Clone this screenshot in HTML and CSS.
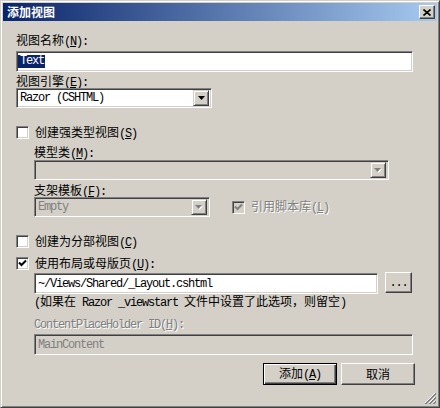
FILE: index.html
```html
<!DOCTYPE html>
<html>
<head>
<meta charset="utf-8">
<link rel="stylesheet" href="styles.css">
</head>
<body>
<div class="window">
  <div class="titlebar">
    <span class="title">添加视图</span>
    <span class="close">
      <svg width="8" height="7" viewBox="0 0 8 7"><path d="M0.5 0.5 L7.5 6.5 M7.5 0.5 L0.5 6.5" stroke="#000" stroke-width="1.6" fill="none"/></svg>
    </span>
  </div>
  <div class="content">
    <div class="label first">视图名称<span class="lat">(<u>N</u>):</span></div>
    <div class="field name-field"><span class="lat sel">Text</span></div>
    <div class="label engine-label">视图引擎<span class="lat">(<u>E</u>):</span></div>
    <div class="field combo engine"><span class="lat val">Razor (CSHTML)</span><span class="dd"><svg width="7" height="4" viewBox="0 0 7 4"><path d="M0 0 H7 L3.5 4 Z" fill="#000"/></svg></span></div>

    <div class="check-row strong"><span class="cb"></span><span>创建强类型视图<span class="lat">(<u>S</u>)</span></span></div>
    <div class="indent">
      <div class="label model-label">模型类<span class="lat">(<u>M</u>):</span></div>
      <div class="field combo disabled model"><span class="val"></span><span class="dd"><svg width="8" height="5" viewBox="0 0 8 5"><path d="M1 1 H8 L4.5 5 Z" fill="#fff"/><path d="M0 0 H7 L3.5 4 Z" fill="#808080"/></svg></span></div>
      <div class="label tmpl-label">支架模板<span class="lat">(<u>F</u>):</span></div>
      <div class="row tmpl-row">
        <div class="field combo disabled tmpl"><span class="lat val">Empty</span><span class="dd"><svg width="8" height="5" viewBox="0 0 8 5"><path d="M1 1 H8 L4.5 5 Z" fill="#fff"/><path d="M0 0 H7 L3.5 4 Z" fill="#808080"/></svg></span></div>
        <div class="check-row inline dis"><span class="cb grey"><svg width="9" height="9" viewBox="0 0 9 9"><path d="M1 3.5 L3.5 6 L8 1.5" stroke="#808080" stroke-width="2" fill="none"/></svg></span><span class="dis-text">引用脚本库<span class="lat">(<u>L</u>)</span></span></div>
      </div>
    </div>

    <div class="check-row partial"><span class="cb"></span><span>创建为分部视图<span class="lat">(<u>C</u>)</span></span></div>
    <div class="check-row layout-check"><span class="cb"><svg width="9" height="9" viewBox="0 0 9 9"><path d="M1 3.5 L3.5 6 L8 1.5" stroke="#000" stroke-width="2" fill="none"/></svg></span><span>使用布局或母版页<span class="lat">(<u>U</u>):</span></span></div>
    <div class="indent">
      <div class="row layout-row">
        <div class="field layout"><span class="lat val">~/Views/Shared/_Layout.cshtml</span></div>
        <div class="btn browse"><span class="lat">...</span></div>
      </div>
      <div class="note"><span class="lat">(</span>如果在<span class="lat"> Razor _viewstart </span>文件中设置了此选项，则留空<span class="lat">)</span></div>
      <div class="label cph-label dis-text"><span class="lat">ContentPlaceHolder ID(<u>H</u>):</span></div>
      <div class="field disabled cph"><span class="lat val grey-text">MainContent</span></div>
    </div>

    <div class="buttons">
      <div class="btn default"><span>添加<span class="lat">(<u>A</u>)</span></span></div>
      <div class="btn"><span>取消</span></div>
    </div>
  </div>
  <svg class="grip" width="12" height="12" viewBox="0 0 12 12">
    <path d="M11 1 L1 11 M11 5 L5 11 M11 9 L9 11" stroke="#fff" stroke-width="1" fill="none"/>
    <path d="M12 1 L1 12 M12 2 L2 12 M12 5 L5 12 M12 6 L6 12 M12 9 L9 12 M12 10 L10 12" stroke="#808080" stroke-width="1" fill="none"/>
  </svg>
</div>
</body>
</html>
```

FILE: styles.css
```css
* { box-sizing: border-box; margin: 0; padding: 0; }
html, body { width: 440px; height: 408px; overflow: hidden; background: #d4d0c8; }
body { font: 12px/14px "Noto Sans CJK SC", sans-serif; color: #000; }

.lat { font-family: "Liberation Mono", monospace; letter-spacing: -1.2px; }
u { text-decoration: underline; }

.window {
  position: relative;
  width: 440px; height: 408px;
  background: #d4d0c8;
  border: 1px solid;
  border-color: #d4d0c8 #404040 #404040 #d4d0c8;
  box-shadow: inset 1px 1px #fff, inset -1px -1px #808080;
  padding: 2px;
  display: flex; flex-direction: column;
}

.titlebar {
  height: 18px;
  background: linear-gradient(to right, #0a246a, #a6caf0);
  display: flex; align-items: center;
  padding: 0 2px;
}
.title { color: #fff; font-weight: bold; font-size: 12px; margin-left: 2px; }
.close {
  margin-left: auto;
  width: 16px; height: 14px;
  background: #d4d0c8;
  border: 1px solid; border-color: #fff #404040 #404040 #fff;
  box-shadow: inset -1px -1px #808080, inset 1px 1px #d4d0c8;
  display: flex; align-items: center; justify-content: center;
}
.close svg { display: block; }

.content { padding: 0 24px 0 13px; display: flex; flex-direction: column; }

.label { height: 14px; white-space: nowrap; }
.first { margin-top: 12px; }
.engine-label { margin-top: 2px; }
.model-label { margin-top: 5px; }
.tmpl-label { margin-top: 3px; }
.cph-label { margin-top: 8px; }

.field {
  background: #fff;
  border: 1px solid;
  border-color: #808080 #fff #fff #808080;
  box-shadow: inset 1px 1px #404040, inset -1px -1px #d4d0c8;
  display: flex; align-items: center;
  padding: 0 2px 0 2px;
  white-space: nowrap;
}
.field.disabled { background: #d4d0c8; }
.name-field { margin-top: 4px; height: 21px; padding-left: 1px; }
.sel { background: #0a246a; color: #fff; padding: 0 1px 0 2px; line-height: 13px; }

.combo { height: 20px; padding-right: 2px; }
.combo .val { flex: 1; padding-left: 1px; }
.dd {
  width: 16px; height: 16px;
  background: #d4d0c8;
  border: 1px solid; border-color: #d4d0c8 #404040 #404040 #d4d0c8;
  box-shadow: inset 1px 1px #fff, inset -1px -1px #808080;
  display: flex; align-items: center; justify-content: center;
}
.dd svg { display: block; }
.engine { width: 196px; }
.model { width: 355px; margin-top: 1px; }
.tmpl { width: 176px; }
.tmpl .val, .disabled .val { color: #808080; }

.indent { padding-left: 18px; display: flex; flex-direction: column; }
.row { display: flex; align-items: center; }
.tmpl-row { margin-top: 0; }

.check-row { display: flex; align-items: center; height: 15px; gap: 6px; white-space: nowrap; }
.strong { margin-top: 17px; }
.partial { margin-top: 17px; }
.layout-check { margin-top: 7px; }
.inline { margin-left: 22px; }

.cb {
  width: 13px; height: 13px;
  background: #fff;
  border: 1px solid; border-color: #808080 #fff #fff #808080;
  box-shadow: inset 1px 1px #404040, inset -1px -1px #d4d0c8;
  display: flex; align-items: center; justify-content: center;
  flex: none;
}
.cb.grey { background: #d4d0c8; }
.cb svg { display: block; }

.dis-text { color: #808080; text-shadow: 1px 1px #fff; }

.layout-row { margin-top: 2px; align-items: flex-start; gap: 7px; }
.layout { width: 344px; height: 21px; padding-left: 3px; }
.btn {
  background: #d4d0c8;
  border: 1px solid; border-color: #fff #404040 #404040 #fff;
  box-shadow: inset -1px -1px #808080, inset 1px 1px #d4d0c8;
  display: flex; align-items: center; justify-content: center;
  white-space: nowrap;
}
.browse { width: 27px; height: 21px; margin-top: -1px; }

.note { height: 14px; white-space: nowrap; }
.cph { margin-top: 4px; height: 21px; padding-left: 3px; }
.grey-text { color: #808080; }

.buttons { display: flex; justify-content: flex-end; gap: 4px; margin-top: 8px; margin-right: -2px; }
.buttons .btn { width: 74px; height: 22px; }
.btn.default {
  border: 1px solid #000;
  box-shadow: inset 1px 1px #fff, inset -1px -1px #404040, inset -2px -2px #808080;
}

.grip { position: absolute; right: 3px; bottom: 3px; }
```
